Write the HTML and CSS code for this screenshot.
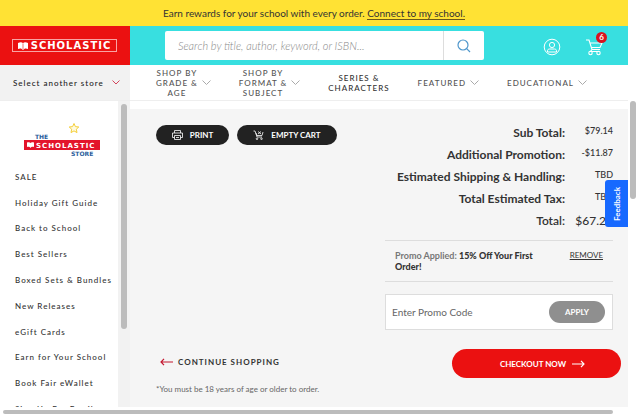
FILE: index.html
```
<!DOCTYPE html>
<html lang="en">
<head>
    <meta charset="UTF-8">
    <meta name="viewport" content="width=device-width, initial-scale=1.0">
    <title>Shopping Cart | The Scholastic Store</title>
    <link rel="stylesheet" href="styles.css">
</head>
<body>

<div class="page">
    <!-- Rewards banner -->
    <div class="banner">
        <p>Earn rewards for your school with every order. <a href="#">Connect to my school.</a></p>
    </div>

    <!-- Header -->
    <header class="header">
        <a class="brand" href="#">
            <span class="brand-box">
                <svg width="10" height="8" viewBox="0 0 10 8"><path d="M0 1 C2 0 4 0 5 1.200 C6 0 8 0 10 1 V7 C8 6 6 6.500 5 8 C4 6.500 2 6 0 7 Z" fill="#fff"/><path d="M5 1.500 V7" stroke="#eb1111" stroke-width=".6"/></svg>
                <span class="brand-name">SCHOLASTIC</span>
            </span>
        </a>
        <form class="search">
            <input type="search" aria-label="Search" placeholder="Search by title, author, keyword, or ISBN...">
            <button type="button" aria-label="Search">
                <svg width="14" height="14" viewBox="0 0 14 14" fill="none" stroke="#4f97cc" stroke-width="1.200"><circle cx="6" cy="6" r="5"/><path d="M9.700 9.700 L13 13"/></svg>
            </button>
        </form>
        <div class="account">
            <a href="#" aria-label="My account">
                <svg width="18" height="18" viewBox="0 0 18 18" fill="none" stroke="#fff"><circle cx="9" cy="9" r="7.800"/><circle cx="9" cy="7" r="2.600"/><path d="M4.500 14 V12.800 C4.500 11.600 5.400 11 6.500 11 H11.500 C12.600 11 13.500 11.600 13.500 12.800 V14 Z"/></svg>
            </a>
            <a class="cart-link" href="#" aria-label="Cart">
                <svg width="18" height="18" viewBox="0 0 18 18" fill="none" stroke="#fff" stroke-width="1.100"><path d="M1 2 H4 L7 11.500 H15 M5 5 H17 L15 9.500 H6.500 M7 11.500 L5.500 13.500 H14"/><circle cx="5.500" cy="15" r="1.700"/><circle cx="13.500" cy="15" r="1.700"/></svg>
                <span class="badge">6</span>
            </a>
        </div>
    </header>

    <!-- Navigation -->
    <div class="nav-row">
        <button class="store-select" type="button">Select another store
            <svg width="8" height="5" viewBox="0 0 8 5" fill="none" stroke="#d2455c"><path d="M.5 .5 L4 4 L7.500 .5"/></svg>
        </button>
        <nav class="nav">
            <a href="#"><span>SHOP BY<br>GRADE &amp;<br>AGE</span><svg class="chevron" viewBox="0 0 9 5"><path d="M.5 .5 L4.500 4.500 L8.500 .5"/></svg></a>
            <a href="#"><span>SHOP BY<br>FORMAT &amp;<br>SUBJECT</span><svg class="chevron" viewBox="0 0 9 5"><path d="M.5 .5 L4.500 4.500 L8.500 .5"/></svg></a>
            <a class="plain" href="#"><span>SERIES &amp;<br>CHARACTERS</span></a>
            <a href="#"><span>FEATURED</span><svg class="chevron" viewBox="0 0 9 5"><path d="M.5 .5 L4.500 4.500 L8.500 .5"/></svg></a>
            <a href="#"><span>EDUCATIONAL</span><svg class="chevron" viewBox="0 0 9 5"><path d="M.5 .5 L4.500 4.500 L8.500 .5"/></svg></a>
        </nav>
    </div>

    <div class="body-row">
        <!-- Sidebar -->
        <aside class="sidebar">
            <div class="sidebar-menu">
                <a class="store-logo" href="#">
                    <svg width="76" height="34" viewBox="0 0 76 34" role="img" aria-label="The Scholastic Store">
                        <path d="M50 1.500 L51.400 4.600 L54.800 5 L52.300 7.200 L53 10.600 L50 8.900 L47 10.600 L47.700 7.200 L45.200 5 L48.600 4.600 Z" fill="#fffbe0" stroke="#f5cf3a"/>
                        <text class="logo-blue" x="11" y="17">THE</text>
                        <rect y="18" width="76" height="10" fill="#e3142b"/>
                        <path d="M3 20.500 C4.500 20 6 20 6.500 21 C7 20 8.500 20 10 20.500 V25 C8.500 24.500 7 25 6.500 26 C6 25 4.500 24.500 3 25 Z" fill="#fff"/>
                        <text class="logo-white" x="12" y="26">SCHOLASTIC</text>
                        <text class="logo-blue" x="47" y="34">STORE</text>
                    </svg>
                </a>
                <ul>
                    <li><a href="#">SALE</a></li>
                    <li><a href="#">Holiday Gift Guide</a></li>
                    <li><a href="#">Back to School</a></li>
                    <li><a href="#">Best Sellers</a></li>
                    <li><a href="#">Boxed Sets &amp; Bundles</a></li>
                    <li><a href="#">New Releases</a></li>
                    <li><a href="#">eGift Cards</a></li>
                    <li><a href="#">Earn for Your School</a></li>
                    <li><a href="#">Book Fair eWallet</a></li>
                    <li><a href="#">Sign Up For Emails</a></li>
                </ul>
            </div>
            <div class="sidebar-track"><div class="thumb"></div></div>
        </aside>

        <!-- Cart -->
        <main class="cart">
            <div class="cart-top">
                <div class="actions">
                    <button class="dark-btn" type="button">
                        <svg width="11" height="10" viewBox="0 0 11 10" fill="none" stroke="#fff" stroke-width=".8"><path d="M2.500 3 V.5 H8.500 V3 M2.500 7.500 H.5 V3 H10.500 V7.500 H8.500 M2.500 5.500 H8.500 V9.500 H2.500 Z M4 7.500 H7"/></svg>
                        PRINT
                    </button>
                    <button class="dark-btn wide" type="button">
                        <svg width="11" height="10" viewBox="0 0 11 10" fill="none" stroke="#fff" stroke-width=".8"><path d="M.5 1 H2 L4 7 H9 M3 3 L4 5.500 H9 L10 2 M5 1.500 L8 4 M8 1.500 L5 4"/><circle cx="4" cy="8.800" r=".8"/><circle cx="8.500" cy="8.800" r=".8"/></svg>
                        EMPTY CART
                    </button>
                </div>

                <div class="summary">
                    <table>
                        <tr><th scope="row">Sub Total:</th><td>$79.14</td></tr>
                        <tr><th scope="row">Additional Promotion:</th><td>-$11.87</td></tr>
                        <tr><th scope="row">Estimated Shipping &amp; Handling:</th><td>TBD</td></tr>
                        <tr><th scope="row">Total Estimated Tax:</th><td>TBD</td></tr>
                        <tr class="total"><th scope="row">Total:</th><td>$67.27</td></tr>
                    </table>

                    <div class="promo">
                        <p>Promo Applied: <strong>15% Off Your First Order!</strong></p>
                        <a href="#">REMOVE</a>
                    </div>

                    <form class="promo-form">
                        <input type="text" aria-label="Promo code" placeholder="Enter Promo Code">
                        <button type="button">APPLY</button>
                    </form>
                </div>
            </div>

            <div class="cart-bottom">
                <a class="continue" href="#">
                    <svg width="13" height="8" viewBox="0 0 13 8" fill="none" stroke="#c4162f" stroke-width="1.200"><path d="M13 4 H1 M4 .8 L1 4 L4 7.200"/></svg>
                    CONTINUE SHOPPING
                </a>
                <button class="checkout" type="button">CHECKOUT NOW
                    <svg width="13" height="8" viewBox="0 0 13 8" fill="none" stroke="#fff" stroke-width="1.200"><path d="M0 4 H12 M9 .8 L12 4 L9 7.200"/></svg>
                </button>
            </div>
            <p class="note">*You must be 18 years of age or older to order.</p>
        </main>
    </div>

    <button class="feedback" type="button">Feedback</button>
</div>

<div class="page-track-y"><div class="thumb"></div></div>
<div class="page-track-x"><div class="thumb"></div></div>

</body>
</html>
```
FILE: styles.css
```
* {
    box-sizing: border-box;
}
body {
    display: grid;
    grid-template-columns: 1fr 11px;
    grid-template-rows: 1fr 10px;
    height: 100vh;
    margin: 0;
    overflow: hidden;
    font-family: Lato, "Liberation Sans", sans-serif;
    font-size: 9px;
    color: #333;
    background-color: #fff;
}
p, ul {
    margin: 0;
    padding: 0;
}
a {
    color: inherit;
    text-decoration: none;
}
button, input {
    font-family: inherit;
    border: none;
    margin: 0;
    padding: 0;
}
button {
    cursor: pointer;
}
svg {
    flex: none;
}
.page {
    position: relative;
    display: flex;
    flex-direction: column;
    min-height: 0;
    overflow: hidden;
}

/* Banner */
.banner {
    height: 26px;
    flex: none;
    line-height: 26px;
    text-align: center;
    font-size: 10px;
    background-color: #ffe234;
}
.banner a {
    border-bottom: 1px solid #6b5a1a;
}

/* Header */
.header {
    display: flex;
    align-items: center;
    flex: none;
    height: 39px;
    background-color: #38dfe0;
}
.brand {
    display: flex;
    align-items: center;
    align-self: stretch;
    width: 130px;
    padding-left: 12px;
    background-color: #eb1111;
}
.brand-box {
    display: flex;
    align-items: center;
    justify-content: center;
    gap: 3px;
    width: 105px;
    height: 13px;
    border: 1px solid #f9a3a3;
}
.brand-name {
    font: bold 10px/11px "DejaVu Sans", sans-serif;
    letter-spacing: 1px;
    color: #fff;
}
.search {
    display: flex;
    flex: 1;
    height: 29px;
    margin-left: 35px;
    border-radius: 2px;
    overflow: hidden;
    background-color: #fff;
}
.search input {
    flex: 1;
    min-width: 0;
    padding-left: 13px;
    font-size: 11px;
    font-style: italic;
    font-weight: 300;
    background: none;
    appearance: none;
}
.search input::placeholder {
    color: #888;
}
.search button {
    display: flex;
    align-items: center;
    justify-content: center;
    width: 41px;
    border-left: 1px solid #ddd;
    background: none;
}
.account {
    display: flex;
    gap: 24px;
    margin: 3px 25px 0 59px;
}
.account svg {
    display: block;
}
.cart-link {
    position: relative;
}
.badge {
    position: absolute;
    top: -6px;
    right: -4px;
    width: 11px;
    height: 11px;
    border-radius: 50%;
    font-size: 8px;
    font-weight: bold;
    line-height: 11px;
    text-align: center;
    color: #fff;
    background-color: #d9121f;
}

/* Navigation */
.nav-row {
    display: flex;
    flex: none;
    height: 36px;
    border-bottom: 1px solid #eee;
}
.store-select {
    display: flex;
    align-items: center;
    justify-content: space-between;
    width: 130px;
    padding: 0 10px 0 13px;
    font-size: 8px;
    font-weight: 500;
    letter-spacing: 1px;
    white-space: nowrap;
    color: #222;
    background-color: #f2f2f2;
}
.nav {
    display: flex;
    flex: 1;
    align-items: center;
    justify-content: space-between;
    padding: 0 41px 0 26px;
    font-size: 8px;
    font-weight: 500;
    letter-spacing: 1px;
    line-height: 10px;
    text-align: center;
    color: #555;
}
.nav a {
    display: flex;
    align-items: center;
    gap: 4px;
}
.nav .plain {
    color: #333;
}
.chevron {
    width: 9px;
    height: 5px;
    fill: none;
    stroke: #aaa;
}

/* Sidebar */
.body-row {
    display: flex;
    flex: 1;
    min-height: 0;
}
.sidebar {
    display: flex;
    flex: none;
    width: 130px;
    overflow: hidden;
}
.sidebar-menu {
    flex: 1;
    min-width: 0;
    padding-top: 21px;
}
.store-logo {
    display: block;
    height: 42px;
    padding-left: 24px;
}
.logo-blue {
    font: bold 6px "DejaVu Sans", sans-serif;
    fill: #2a5d9c;
}
.logo-white {
    font: bold 7px "DejaVu Sans", sans-serif;
    letter-spacing: 1px;
    fill: #fff;
}
.sidebar ul {
    display: grid;
    grid-auto-rows: 1fr;
    align-items: center;
    height: 258px;
    list-style: none;
    padding-left: 15px;
    font-size: 8px;
    font-weight: 500;
    letter-spacing: 1px;
    white-space: nowrap;
}
.sidebar-track {
    flex: none;
    width: 12px;
    padding: 3px;
    background-color: #f2f2f2;
}
.thumb {
    border-radius: 3px;
    background-color: #bcbcbc;
}
.sidebar-track .thumb {
    height: 75%;
}

/* Cart */
.cart {
    display: flex;
    flex-direction: column;
    flex: 1;
    margin-top: 8px;
    padding: 12px 7px 0 26px;
    background-color: #f5f5f5;
}
.cart-top {
    display: flex;
    justify-content: space-between;
    padding-right: 8px;
}
.actions {
    display: flex;
    align-items: flex-start;
    gap: 8px;
    padding-top: 4px;
}
.dark-btn {
    display: flex;
    align-items: center;
    justify-content: center;
    gap: 7px;
    width: 73px;
    height: 20px;
    border-radius: 10px;
    font-size: 8px;
    font-weight: bold;
    color: #fff;
    background-color: #222;
}
.dark-btn.wide {
    width: 100px;
}
.summary {
    width: 228px;
}
.summary table {
    width: 100%;
    border-collapse: collapse;
}
.summary tr {
    height: 22px;
}
.summary th, .summary td {
    padding: 0;
    text-align: right;
    white-space: nowrap;
}
.summary th {
    font-size: 12px;
}
.summary td {
    width: 48px;
    padding-bottom: 4px;
    font-size: 9px;
    font-weight: 500;
}
.summary .total th {
    font-weight: 600;
}
.summary .total td {
    padding-bottom: 0;
    font-size: 12px;
}
.promo {
    display: flex;
    justify-content: space-between;
    margin-top: 9px;
    padding: 9px 10px;
    font-size: 9px;
    line-height: 11px;
    border-top: 1px solid #ddd;
    border-bottom: 1px solid #ddd;
}
.promo p {
    width: 160px;
    font-weight: bold;
    color: #777;
}
.promo strong {
    color: #333;
}
.promo a {
    font-size: 8px;
    text-decoration: underline;
}
.promo-form {
    display: flex;
    align-items: center;
    height: 36px;
    margin-top: 12px;
    padding: 0 7px 0 6px;
    border: 1px solid #ddd;
    background-color: #fff;
}
.promo-form input {
    flex: 1;
    min-width: 0;
    font-size: 10px;
    background: none;
}
.promo-form input::placeholder {
    color: #666;
}
.promo-form button {
    width: 56px;
    height: 22px;
    border-radius: 11px;
    font-size: 8px;
    font-weight: bold;
    color: #fff;
    background-color: #8f8f8f;
}
.cart-bottom {
    display: flex;
    align-items: center;
    justify-content: space-between;
    margin-top: 19px;
}
.continue {
    display: flex;
    align-items: center;
    gap: 5px;
    padding-left: 4px;
    margin-bottom: 4px;
    font-size: 8px;
    font-weight: bold;
    letter-spacing: 1px;
}
.checkout {
    display: flex;
    align-items: center;
    justify-content: center;
    gap: 6px;
    width: 169px;
    height: 29px;
    padding-left: 12px;
    border-radius: 15px;
    font-size: 8px;
    font-weight: bold;
    color: #fff;
    background-color: #eb1111;
}
.note {
    margin-top: 5px;
    font-size: 8px;
    line-height: 12px;
    color: #666;
}

/* Feedback tab */
.feedback {
    position: absolute;
    top: 180px;
    right: 0;
    width: 23px;
    height: 47px;
    border-radius: 3px 0 0 3px;
    font-size: 8px;
    font-weight: bold;
    writing-mode: sideways-lr;
    color: #fff;
    background-color: #1769ff;
}

/* Page scrollbars */
.page-track-y {
    padding: 101px 3px 0 2px;
}
.page-track-y .thumb {
    height: 98px;
}
.page-track-x {
    padding: 3px 15px 3px 3px;
}
.page-track-x .thumb {
    height: 4px;
}
```
